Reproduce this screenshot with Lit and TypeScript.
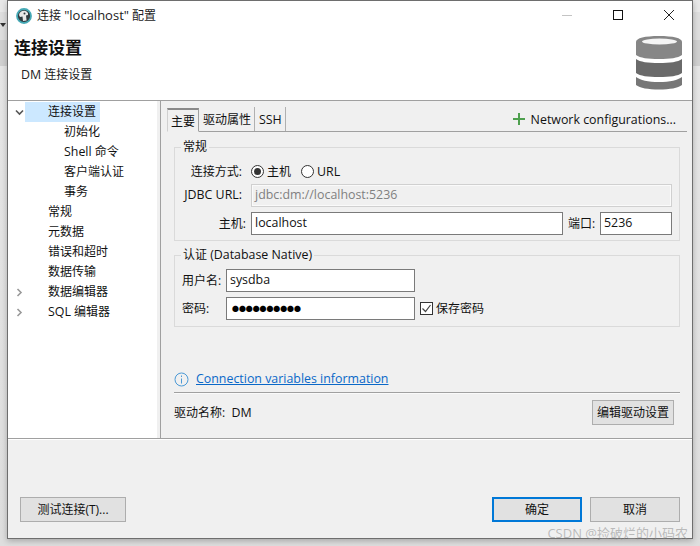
import { LitElement, html, css, svg } from "lit";
import { customElement } from "lit/decorators.js";

@customElement("app-root")
export class AppRoot extends LitElement {
  static styles = css`
    :host { display: block; width: 700px; height: 546px; overflow: hidden; font-family: "Open Sans", "Noto Sans", "Noto Sans CJK SC", sans-serif; font-size: 12px; color: #111; }
    * { box-sizing: border-box; }
    .en { font-size: 12.4px; }
    .desk { width: 700px; height: 546px; background: linear-gradient(to bottom, #e8e8e8 0, #e8e8e8 12px, #dedede 12px, #dedede 40px, #d0d0d0 40px, #d0d0d0 66px, #e6e6e6 66px, #dedede 100%); display: flex; align-items: flex-start; position: relative; }
    .strip { width: 7px; height: 546px; display: flex; flex-direction: column; padding-top: 23px; flex: none; }
    .caret { width: 0; height: 0; border: 3.5px solid transparent; border-top: 4px solid #333; }
    .win { width: 686px; height: 539px; background: #f0f0f0; border: 1px solid #6e6e6e; box-shadow: 0 2px 6px rgba(0,0,0,.25); display: flex; flex-direction: column; flex: none; }
    .title { height: 28px; background: #fff; display: flex; align-items: center; padding-left: 8px; flex: none; gap: 5px; }
    .title .t { flex: 1; font-size: 12px; color: #222; }
    .title .t .en { font-size: 13px; }
    .ticon { margin-top: 1px; }
    .wc { width: 46px; height: 28px; display: flex; align-items: center; justify-content: center; }
    .head { height: 72px; background: #fff; border-bottom: 1px solid #a0a0a0; display: flex; flex: none; justify-content: space-between; }
    .head h1 { margin: 9px 0 0 6px; font-size: 17px; font-weight: 700; line-height: 20px; color: #111; }
    .head p { margin: 7px 0 0 13px; font-size: 12px; line-height: 20px; color: #222; }
    .dbicon { margin: 7px 10px 0 0; }
    .mid { height: 338px; display: flex; flex: none; border-bottom: 1px solid #a0a0a0; }
    .tree { width: 149px; background: #fff; flex: none; padding-top: 1px; }
    .sash { width: 4px; background: #f0f0f0; border-right: 1px solid #a0a0a0; flex: none; }
    .row { height: 20px; display: flex; align-items: center; line-height: 20px; white-space: nowrap; }
    .row .tw { width: 17px; flex: none; display: flex; justify-content: center; padding-left: 5px; }
    .row .sel { width: 75px; height: 20px; background: #cce8ff; padding-left: 23px; }
    .row .lb { padding-left: 23px; }
    .row.sub .lb { padding-left: 39px; }
    .right { flex: 1; min-width: 0; display: flex; flex-direction: column; background: #f0f0f0; }
    .tabs { height: 31px; display: flex; align-items: flex-end; padding: 0 5px 0 6px; flex: none; }
    .tabline { flex: 1; display: flex; align-items: flex-end; height: 31px; border-bottom: 1px solid #a0a0a0; }
    .tab { height: 24px; padding: 2px 3px 0 4px; line-height: 22px; border-right: 1px solid #b0b0b0; white-space: nowrap; }
    .tab.on { width: 32px; padding: 2px 0 0 3px; border-top: 2px solid #8a8a8a; border-right: 1px solid #a0a0a0; border-left: 1px solid #d0d0d0; line-height: 20px; border-bottom: 1px solid #f0f0f0; margin-bottom: -1px; }
    .net { margin-left: auto; display: flex; align-items: center; gap: 6px; height: 24px; padding-right: 11px; }
    .body { flex: 1; padding: 15px 12px 0 13px; display: flex; flex-direction: column; min-height: 0; }
    .fs { border: 1px solid #dadada; margin: 0; position: relative; }
    .fs > .lg { position: absolute; left: 6px; top: -9px; background: #f0f0f0; padding: 0 2px; line-height: 16px; }
    .f1 { height: 94px; padding: 12px 7px 0 7px; }
    .f2 { height: 72px; margin-top: 14px; padding: 13px 7px 0 7px; }
    .fr { display: flex; align-items: center; }
    .l1 { width: 69px; text-align: right; padding-right: 9px; flex: none; white-space: nowrap; }
    .l1.tight { padding-right: 5px; }
    .gap2 .l1, .gap5 .l1, .portl, .ul, .savel, .drvl, .link { padding-bottom: 2px; }
    .radios { height: 22px; }
    .radio { width: 13px; height: 13px; margin-right: 3px; border: 1px solid #333; border-radius: 50%; background: #fff; display: flex; align-items: center; justify-content: center; flex: none; }
    .radio.second { margin-left: 10px; }
    .radio i { width: 7px; height: 7px; border-radius: 50%; background: #333; display: block; }
    .input { height: 23px; border: 1px solid #7a7a7a; background: #fff; line-height: 19px; padding-left: 3px; white-space: nowrap; overflow: hidden; font-size: 12.4px; }
    .input.dis { width: 421px; background: #f0f0f0; border: 1px solid #d0d0d0; outline: 1px solid #fafafa; outline-offset: -2px; color: #808080; }
    .host { width: 312px; }
    .port { width: 72px; }
    .portl { margin: 0 5px; }
    .cred { width: 189px; }
    .input.dots { color: #000; font-size: 6.9px; line-height: 21px; padding-left: 5px; }
    .gap2 { margin-top: 2px; }
    .gap5 { margin-top: 5px; }
    .ul { width: 44px; white-space: nowrap; }
    .savel { margin-left: 3px; }
    .check { width: 13px; height: 13px; margin-left: 5px; border: 1px solid #333; background: #fff; flex: none; display: flex; align-items: center; justify-content: center; }
    .info { margin-top: 42px; gap: 7px; height: 20px; }
    .bar { height: 2px; background: #a0a0a0; border-bottom: 1px solid #fafafa; margin-top: 3px; }
    .drv { margin-top: 6px; justify-content: space-between; padding-right: 6px; }
    .link { color: #0a68c8; text-decoration: underline; font-size: 12.4px; }
    .btn { height: 25px; padding-bottom: 2px; border: 1px solid #adadad; background: #e1e1e1; display: flex; align-items: center; justify-content: center; white-space: nowrap; flex: none; color: #111; }
    .btn.def { border: 2px solid #0078d7; margin-left: auto; }
    .b82 { width: 82px; }
    .b106 { width: 106px; }
    .b90 { width: 90px; }
    .cancel { margin-left: 8px; }
    .foot { flex: 1; display: flex; align-items: flex-start; padding: 57px 12px 0 12px; border-top: 1px solid #fff; }
    .wm { position: absolute; right: 12px; bottom: 4px; font-size: 13px; line-height: 18px; color: rgba(140,140,140,.55); white-space: nowrap; }
  `;

  private chev(down: boolean) {
    return html`<svg width="9" height="9" viewBox="0 0 9 9" fill="none" stroke=${down ? "#555" : "#999"} stroke-width="1.6">
      ${down ? svg`<path d="M1 2.5 L4.5 6 L8 2.5"/>` : svg`<path d="M2.5 1 L6 4.5 L2.5 8"/>`}
    </svg>`;
  }

  render() {
    return html`<div class="desk">
      <div class="strip"><div class="caret"></div></div>
      <div class="win">
        <div class="title">
          <svg class="ticon" width="16" height="16" viewBox="0 0 16 16">
            <circle cx="8" cy="8" r="7" fill="#2f3b40" stroke="#45a9b5" stroke-width="1.8"/>
            <path d="M3 7 C3.5 4 6 2.6 8.5 2.8 C11 3 12.5 5 12 7 L10 7.5 L10.6 12.6 L7 13 L6.5 8.5 L4 9 Z" fill="#e8e8e8"/>
            <circle cx="8.5" cy="5.5" r="1" fill="#2f3b40"/>
          </svg>
          <span class="t">连接 <span class="en">"localhost"</span> 配置</span>
          <div class="wc"><svg width="10" height="10" viewBox="0 0 10 10"><path d="M0 5.5 H10" stroke="#c4c4c4"/></svg></div>
          <div class="wc"><svg width="10" height="10" viewBox="0 0 10 10"><rect x="0.5" y="0.5" width="9" height="9" fill="none" stroke="#111"/></svg></div>
          <div class="wc"><svg width="10" height="10" viewBox="0 0 10 10"><path d="M0 0 L10 10 M10 0 L0 10" stroke="#222"/></svg></div>
        </div>
        <div class="head">
          <div>
            <h1>连接设置</h1>
            <p><span class="en">DM</span> 连接设置</p>
          </div>
          <svg class="dbicon" width="46" height="54" viewBox="0 0 46 54">
            <path d="M0 6 C0 2 9 0 23 0 C37 0 46 2 46 6 V19 C42 22 34 23 23 23 C12 23 4 22 0 19 Z" fill="#868686"/>
            <ellipse cx="23.5" cy="5.5" rx="17.5" ry="3" fill="#f4f4f4"/>
            <path d="M0 23 C4 26 12 27 23 27 C34 27 42 26 46 23 V37 C42 40 34 41 23 41 C12 41 4 40 0 37 Z" fill="#6a6a6a"/>
            <path d="M0 41 C4 44 12 46 23 46 C34 46 42 44 46 41 V49 C42 52 34 53.5 23 53.5 C12 53.5 4 52 0 49 Z" fill="#777"/>
          </svg>
        </div>
        <div class="mid">
          <div class="tree">
            <div class="row"><span class="tw">${this.chev(true)}</span><span class="sel">连接设置</span></div>
            <div class="row sub"><span class="tw"></span><span class="lb">初始化</span></div>
            <div class="row sub"><span class="tw"></span><span class="lb"><span class="en">Shell</span> 命令</span></div>
            <div class="row sub"><span class="tw"></span><span class="lb">客户端认证</span></div>
            <div class="row sub"><span class="tw"></span><span class="lb">事务</span></div>
            <div class="row"><span class="tw"></span><span class="lb">常规</span></div>
            <div class="row"><span class="tw"></span><span class="lb">元数据</span></div>
            <div class="row"><span class="tw"></span><span class="lb">错误和超时</span></div>
            <div class="row"><span class="tw"></span><span class="lb">数据传输</span></div>
            <div class="row"><span class="tw">${this.chev(false)}</span><span class="lb">数据编辑器</span></div>
            <div class="row"><span class="tw">${this.chev(false)}</span><span class="lb"><span class="en">SQL</span> 编辑器</span></div>
          </div>
          <div class="sash"></div>
          <div class="right">
            <div class="tabs">
              <div class="tabline">
                <div class="tab on">主要</div>
                <div class="tab">驱动属性</div>
                <div class="tab en">SSH</div>
                <div class="net">
                  <svg width="12" height="12" viewBox="0 0 12 12"><path d="M6 0 V12 M0 6 H12" stroke="#4ea04e" stroke-width="2"/></svg>
                  <span class="en">Network configurations...</span>
                </div>
              </div>
            </div>
            <div class="body">
              <div class="fs f1">
                <span class="lg">常规</span>
                <div class="fr radios">
                  <span class="l1">连接方式:</span>
                  <span class="radio"><i></i></span><span>主机</span>
                  <span class="radio second"></span><span class="en">URL</span>
                </div>
                <div class="fr gap2">
                  <span class="l1 en">JDBC URL:</span>
                  <div class="input dis">jdbc:dm://localhost:5236</div>
                </div>
                <div class="fr gap5">
                  <span class="l1 tight">主机:</span>
                  <div class="input host">localhost</div>
                  <span class="portl">端口:</span>
                  <div class="input port">5236</div>
                </div>
              </div>
              <div class="fs f2">
                <span class="lg">认证 <span class="en">(Database Native)</span></span>
                <div class="fr">
                  <span class="ul">用户名:</span>
                  <div class="input cred">sysdba</div>
                </div>
                <div class="fr gap5">
                  <span class="ul">密码:</span>
                  <div class="input cred dots">●●●●●●●●●●</div>
                  <span class="check"><svg width="11" height="11" viewBox="0 0 11 11"><path d="M1.5 5.5 L4.5 8.5 L9.5 2" fill="none" stroke="#444" stroke-width="1.2"/></svg></span>
                  <span class="savel">保存密码</span>
                </div>
              </div>
              <div class="fr info">
                <svg width="15" height="15" viewBox="0 0 15 15" fill="none" stroke="#4c9ad6"><circle cx="7.5" cy="7.5" r="6.5"/><path d="M7.5 6.5 V11.5 M7.5 3.5 V5"/></svg>
                <span class="link">Connection variables information</span>
              </div>
              <div class="bar"></div>
              <div class="fr drv">
                <span class="drvl">驱动名称:&nbsp; <span class="en">DM</span></span>
                <div class="btn b82">编辑驱动设置</div>
              </div>
            </div>
          </div>
        </div>
        <div class="foot">
          <div class="btn b106">测试连接(T)...</div>
          <div class="btn def b90">确定</div>
          <div class="btn b90 cancel">取消</div>
        </div>
      </div>
      <div class="wm">CSDN @捡破烂的小码农</div>
    </div>`;
  }
}
